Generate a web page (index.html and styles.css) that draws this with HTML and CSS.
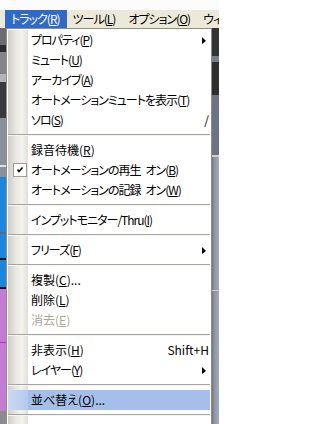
FILE: index.html
```html
<!DOCTYPE html>
<html lang="ja">
<head>
<meta charset="utf-8">
<title>トラック メニュー</title>
<link rel="stylesheet" href="styles.css">
</head>
<body>
<div class="screen">
  <div class="titlestrip"></div>
  <div class="menubar">
    <div class="mb active">トラック(<u>R</u>)</div>
    <div class="mb">ツール(<u>L</u>)</div>
    <div class="mb">オプション(<u>O</u>)</div>
    <div class="mb">ウィンドウ(<u>W</u>)</div>
  </div>
  <div class="workspace">
    <div class="side left">
      <i class="b1"></i><i class="b2"></i><i class="b3"></i><i class="b4"></i><i class="b5"></i><i class="b6"></i><i class="b7"></i><i class="b6b"></i>
      <i class="blue h55"></i><i class="ln1"></i><i class="blue h24"></i><i class="ln2"></i><i class="blue h27"></i><i class="ln2"></i>
      <i class="purple h53"></i><i class="mag"></i><i class="purple h68"></i><i class="grey"></i>
    </div>
    <div class="menu">
      <div class="list">
        <div class="item"><span class="gut"></span><span class="label">プロパティ(<u>P</u>)</span><span class="arrow"></span></div>
        <div class="item"><span class="gut"></span><span class="label">ミュート(<u>U</u>)</span></div>
        <div class="item"><span class="gut"></span><span class="label">アーカイブ(<u>A</u>)</span></div>
        <div class="item"><span class="gut"></span><span class="label">オートメーションミュートを表示(<u>T</u>)</span></div>
        <div class="item"><span class="gut"></span><span class="label">ソロ(<u>S</u>)</span><span class="key">/</span></div>
        <div class="sep"><span class="rule"></span></div>
        <div class="item"><span class="gut"></span><span class="label kanji">録音待機(<u>R</u>)</span></div>
        <div class="item"><span class="gut"><svg class="check" width="14" height="14" viewBox="0 0 14 14"><rect x="0.5" y="0.5" width="13" height="13" fill="#fff" stroke="#9c9c9c"/><path d="M4.5 6.5 L6 8.5 L9.5 4.5" fill="none" stroke="#000" stroke-width="1.5"/></svg></span><span class="label">オートメーションの再生<span class="sp"> </span>オン(<u>B</u>)</span></div>
        <div class="item"><span class="gut"></span><span class="label">オートメーションの記録<span class="sp"> </span>オン(<u>W</u>)</span></div>
        <div class="sep"><span class="rule"></span></div>
        <div class="item"><span class="gut"></span><span class="label">インプットモニター/Thru(<u>I</u>)</span></div>
        <div class="sep"><span class="rule"></span></div>
        <div class="item"><span class="gut"></span><span class="label">フリーズ(<u>F</u>)</span><span class="arrow"></span></div>
        <div class="sep"><span class="rule"></span></div>
        <div class="item"><span class="gut"></span><span class="label kanji">複製(<u>C</u>)...</span></div>
        <div class="item"><span class="gut"></span><span class="label kanji">削除(<u>L</u>)</span></div>
        <div class="item disabled"><span class="gut"></span><span class="label kanji">消去(<u>E</u>)</span></div>
        <div class="sep"><span class="rule"></span></div>
        <div class="item"><span class="gut"></span><span class="label kanji">非表示(<u>H</u>)</span><span class="key">Shift+H</span></div>
        <div class="item"><span class="gut"></span><span class="label">レイヤー(<u>Y</u>)</span><span class="arrow"></span></div>
        <div class="sep"><span class="rule"></span></div>
        <div class="item hot"><span class="gut"></span><span class="label kanji">並べ替え(<u>O</u>)...</span></div>
        <div class="sep"><span class="rule"></span></div>
        <div class="item"><span class="gut"></span><span class="label"></span></div>
      </div>
    </div>
    <div class="side right">
      <i class="r1"></i><i class="r2"></i><i class="r3"></i><i class="r4"></i><i class="r5"></i><i class="r6"></i><i class="r7"></i><i class="r8"></i>
    </div>
  </div>
</div>
</body>
</html>
```

FILE: styles.css
```css
* { box-sizing: border-box; }
html, body { margin: 0; padding: 0; }
body {
  background: #fff;
  font-family: "Noto Sans CJK JP", "Liberation Sans", sans-serif;
  font-size: 12px;
  font-feature-settings: "palt";
  color: #000;
  overflow: hidden;
}
.screen {
  width: 219px;
  height: 424px;
  overflow: hidden;
  display: flex;
  flex-direction: column;
}
.titlestrip { height: 10px; flex: none; background: #fcfcfc; }
.menubar {
  height: 18px;
  flex: none;
  display: flex;
  padding-left: 5px;
  background: #ece9d8;
  white-space: nowrap;
  line-height: 18px;
  letter-spacing: -1px;
  overflow: hidden;
}
.mb { padding: 0 7px 0 6px; flex: none; }
.mb.active { background: #316ac5; color: #fff; }
.mb u, .label u { text-decoration-thickness: 1px; text-underline-offset: 1px; }

.workspace { flex: 1; display: flex; min-height: 0; }
.side { display: flex; flex-direction: column; flex: none; }
.side i { display: block; flex: none; }
.side.left { width: 6px; }
.side.right { width: 7px; }

.left .b1 { height: 17px; background: #6c6c6c; }
.left .b2 { height: 7px; background: #2a2a2a; }
.left .b3 { height: 22px; background: #858585; }
.left .b4 { height: 8px; background: #b4b4b4; }
.left .b5 { height: 36px; background: #3a3a3a; }
.left .b6 { height: 47px; background: #8a8f98; }
.left .b7 { height: 2px; background: #e0e0e0; }
.left .b6b { height: 10px; background: #8a8f98; }
.left .blue { background: #1a86e0; }
.left .h55 { height: 55px; }
.left .h24 { height: 24px; }
.left .h27 { height: 27px; }
.left .ln1 { height: 2px; background: #5a6a7a; }
.left .ln2 { height: 2px; background: #151515; }
.left .purple { background: #c47cd2; }
.left .h53 { height: 53px; }
.left .h68 { height: 68px; }
.left .mag { height: 1px; background: #d020d8; }
.left .grey { height: 20px; background: #8c8c8c; }

.right .r1 { height: 28px; background: #343434; }
.right .r2 { height: 6px; background: #7a7e86; }
.right .r3 { height: 33px; background: #2e2e2e; }
.right .r4 { height: 60px; background: #6a7388; }
.right .r5 { height: 2px; background: #d0d0d0; }
.right .r6 { height: 133px; background: linear-gradient(to right, #6c7280 0, #8a93a3 2px, #a4acba 7px); }
.right .r7 { height: 1px; background: #c8ccd4; }
.right .r8 { height: 140px; background: linear-gradient(to right, #6c7280 0, #8a93a3 2px, #a4acba 7px); }

.menu {
  width: 206px;
  flex: none;
  border: 1px solid #8e8c84;
  border-bottom: none;
  padding: 1px 1px 0 1px;
  background: #fff;
}
.list {
  background: linear-gradient(to right, #cfcdc6 0, #e9e8e3 8px, #f3f2ee 14px, #e1dfd8 20px, #fff 20px);
}
.item {
  height: 20px;
  display: flex;
  align-items: center;
  white-space: nowrap;
}
.gut {
  width: 20px;
  height: 20px;
  flex: none;
  display: flex;
  align-items: center;
  padding-left: 5px;
}
.label {
  flex: 1;
  padding-left: 3px;
  line-height: 20px;
  letter-spacing: -1px;
}
.label .sp { display: inline-block; width: 5px; }
.label.kanji { letter-spacing: 0; }
.key { padding-right: 1px; line-height: 20px; }
.arrow {
  width: 0;
  height: 0;
  margin-right: 4px;
  border-left: 4px solid #000;
  border-top: 4px solid transparent;
  border-bottom: 3px solid transparent;
}
.disabled { color: #aca899; }
.hot { background: #a5bfe9; }
.hot .gut { background: linear-gradient(to right, #cad9f2, #b4c9ee); }
.check { display: block; }
.sep {
  height: 10px;
  display: flex;
  flex-direction: column;
  justify-content: center;
}
.rule {
  display: block;
  height: 2px;
  border-top: 1px solid #a7a59d;
  border-bottom: 1px solid #f4f4f2;
}
```
